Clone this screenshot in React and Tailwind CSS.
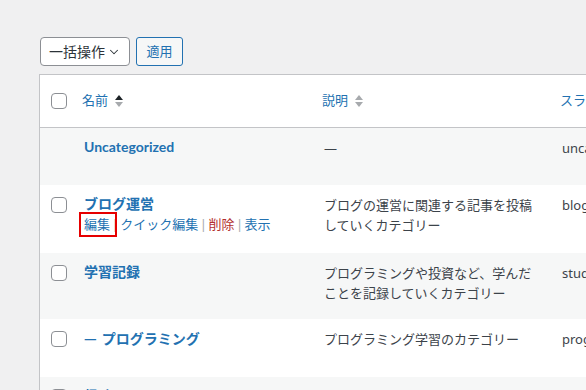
import { ChevronDown } from 'lucide-react'

const FONT = "font-['Noto_Sans','Noto_Sans_CJK_JP',sans-serif]"

const ROWS = [
  { name: 'Uncategorized', desc: '—', slug: 'uncategorized', h: 'h-[57px]', striped: true, noCheck: true },
  { name: 'ブログ運営', desc: 'ブログの運営に関連する記事を投稿していくカテゴリー', slug: 'blog', h: 'h-[68px]', striped: false, actions: true },
  { name: '学習記録', desc: 'プログラミングや投資など、学んだことを記録していくカテゴリー', slug: 'study', h: 'h-[66px]', striped: true },
  { name: 'プログラミング', child: true, desc: 'プログラミング学習のカテゴリー', slug: 'programming', h: 'h-[58px]', striped: false },
  { name: '趣味', desc: '', slug: 'hobby', h: 'h-[58px]', striped: true },
]

function SortIcon({ active }) {
  return (
    <svg width="8" height="16" viewBox="0 0 8 16" className="ml-[7px] shrink-0">
      <path d="M0 7 L4 2 L8 7 Z" fill={active ? '#1d2327' : '#a7aaad'} />
      <path d="M0 9 L4 14 L8 9 Z" fill="#a7aaad" />
    </svg>
  )
}

function Checkbox() {
  return <span className="block w-[16px] h-[16px] rounded-[4px] border border-[#8c8f94] bg-white" />
}

function Sep() {
  return <span className="text-[#a7aaad] px-[1.5px]">|</span>
}

export default function App() {
  return (
    <div className={`${FONT} w-[586px] h-[390px] overflow-hidden bg-[#f0f0f1] pt-[37px] pl-[40px]`}>
      {/* Bulk actions */}
      <div className="flex items-center gap-[6px]">
        <div className="w-[90px] h-[29px] rounded-[4px] border border-[#8c8f94] bg-white flex items-center justify-between pl-[8px] pr-[8px] text-[14px] text-[#2c3338]">
          <span>一括操作</span>
          <ChevronDown size={14} strokeWidth={1.75} className="text-[#2c3338]" />
        </div>
        <button className="w-[47px] h-[29px] rounded-[3px] border border-[#2271b1] bg-[#f6f7f7] text-[13px] text-[#2271b1] flex items-center justify-center">
          適用
        </button>
      </div>

      {/* Table */}
      <div className="mt-[8px] -ml-[1px] w-[700px] border border-[#c3c4c7] bg-white">
        <div className="grid grid-cols-[32px_240px_240px_1fr] h-[53px] items-center border-b border-[#c3c4c7] text-[13px] text-[#2271b1]">
          <div className="pl-[11px]"><Checkbox /></div>
          <div className="flex items-center pl-[10px]">
            <span>名前</span>
            <SortIcon active />
          </div>
          <div className="flex items-center pl-[10px]">
            <span>説明</span>
            <SortIcon />
          </div>
          <div className="pl-[8px]">スラッグ</div>
        </div>

        {ROWS.map((r) => (
          <div
            key={r.name}
            className={`grid grid-cols-[32px_240px_240px_1fr] ${r.h} ${r.striped ? 'bg-[#f6f7f7]' : 'bg-white'}`}
          >
            <div className="pl-[11px] pt-[12px]">{!r.noCheck && <Checkbox />}</div>
            <div className="pl-[12px] pt-[9px]">
              <div className="font-['Lato','Noto_Sans_CJK_JP',sans-serif] text-[14px] leading-[20px] font-bold text-[#2271b1]">
                {r.child && <span className="font-['Noto_Sans_CJK_JP',sans-serif] mr-[5px]">—</span>}
                {r.name}
              </div>
              {r.actions && (
                <div className="text-[13px] leading-[20px] text-[#2271b1] whitespace-nowrap">
                  <span className="relative">
                    編集
                    <span className="absolute left-[-5px] top-[-3px] w-[38px] h-[25px] border-2 border-[#e60000]" />
                  </span>
                  <Sep />
                  <span>クイック編集</span>
                  <Sep />
                  <span className="text-[#b32d2e]">削除</span>
                  <Sep />
                  <span>表示</span>
                </div>
              )}
            </div>
            <div className="pl-[12px] pr-[8px] pt-[10px] text-[13px] leading-[20px] text-[#3c434a]">{r.desc}</div>
            <div className="pl-[10px] pt-[10px] text-[13px] leading-[20px] text-[#3c434a] whitespace-nowrap">{r.slug}</div>
          </div>
        ))}
      </div>
    </div>
  )
}
